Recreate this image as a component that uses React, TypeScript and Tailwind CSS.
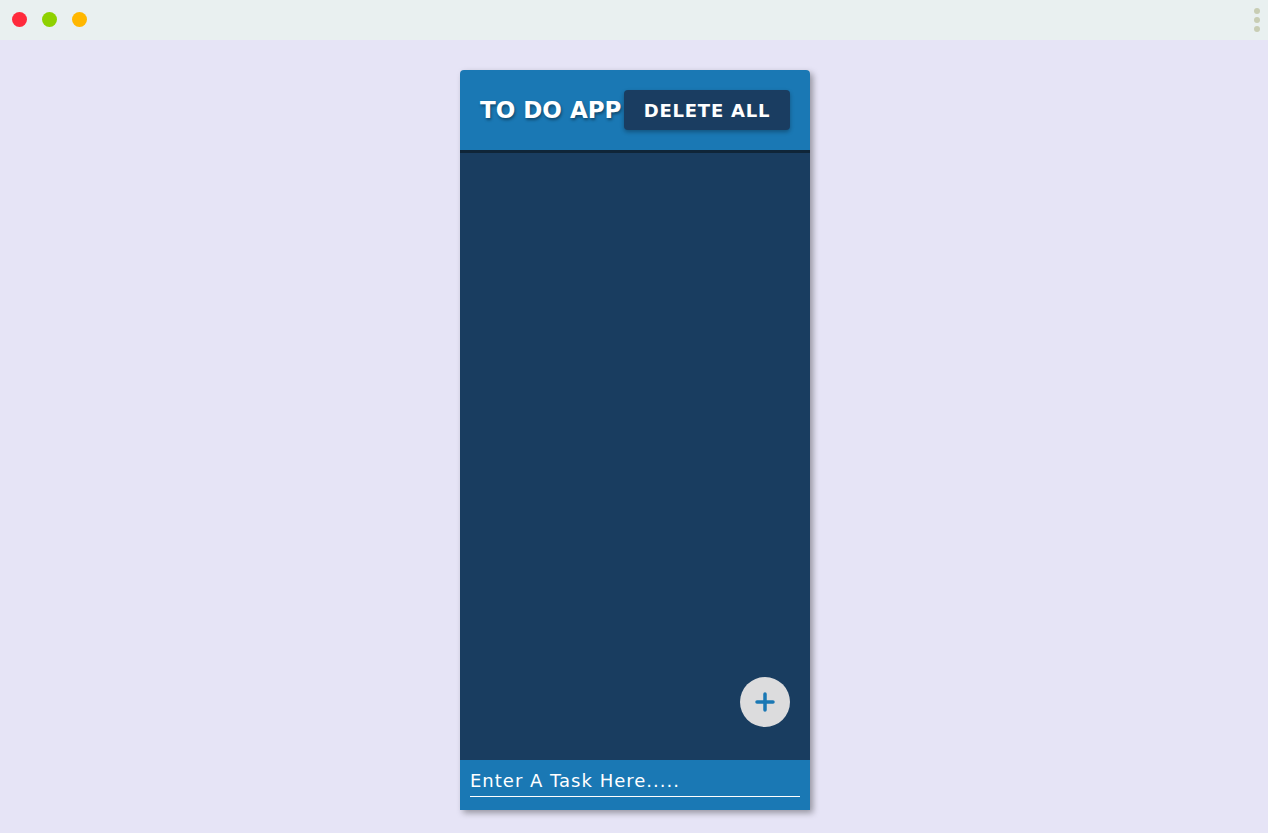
import React from "react";

export default function App() {
  return (
    <div className="w-[1268px] h-[833px] bg-[#e6e4f6] flex flex-col overflow-hidden" style={{ fontFamily: '"DejaVu Sans", sans-serif' }}>
      <div className="h-[40px] bg-[#e9f0f0] flex items-center justify-between pl-[12px] pr-[8px] shrink-0">
        <div className="flex gap-[15px] -mt-[2px]">
          <div className="w-[15px] h-[15px] rounded-full bg-[#ff2a3c]" />
          <div className="w-[15px] h-[15px] rounded-full bg-[#8fd100]" />
          <div className="w-[15px] h-[15px] rounded-full bg-[#ffb700]" />
        </div>
        <div className="flex flex-col gap-[3px] -mt-[1px]">
          <div className="w-[6px] h-[6px] rounded-full bg-[#c8cdb4]" />
          <div className="w-[6px] h-[6px] rounded-full bg-[#c8cdb4]" />
          <div className="w-[6px] h-[6px] rounded-full bg-[#c8cdb4]" />
        </div>
      </div>
      <div className="flex justify-center pt-[30px] pl-[2px]">
        <div className="w-[350px] h-[740px] flex flex-col rounded-t-[4px] overflow-hidden shadow-[3px_3px_6px_rgba(0,0,0,0.35)]">
          <div className="h-[80px] bg-[#1a78b4] flex items-center justify-between px-[20px] shrink-0">
            <h1 className="text-white font-bold text-[23px] [text-shadow:1px_2px_3px_rgba(0,0,0,0.4)]">TO DO APP</h1>
            <button className="w-[166px] h-[40px] bg-[#1a3d61] rounded-[4px] text-white font-bold text-[18px] tracking-[0.8px] shadow-[0_2px_4px_rgba(0,0,0,0.3)]">DELETE ALL</button>
          </div>
          <div className="h-[3px] bg-[#0f2538] shrink-0" />
          <div className="flex-1 bg-[#193d60] flex items-end justify-end pr-[20px] pb-[33px]">
            <div className="w-[50px] h-[50px] rounded-full bg-[#dcdcdd] flex items-center justify-center">
              <svg width="20" height="20" viewBox="0 0 20 20">
                <path d="M10 2V18M2 10H18" stroke="#1a78b4" strokeWidth="3.5" strokeLinecap="round" />
              </svg>
            </div>
          </div>
          <div className="h-[50px] bg-[#1a78b4] px-[10px] pt-[9px] shrink-0">
            <div className="border-b border-white h-[28px] text-white text-[18px] tracking-[1px] leading-[24px]">Enter A Task Here.....</div>
          </div>
        </div>
      </div>
    </div>
  );
}
